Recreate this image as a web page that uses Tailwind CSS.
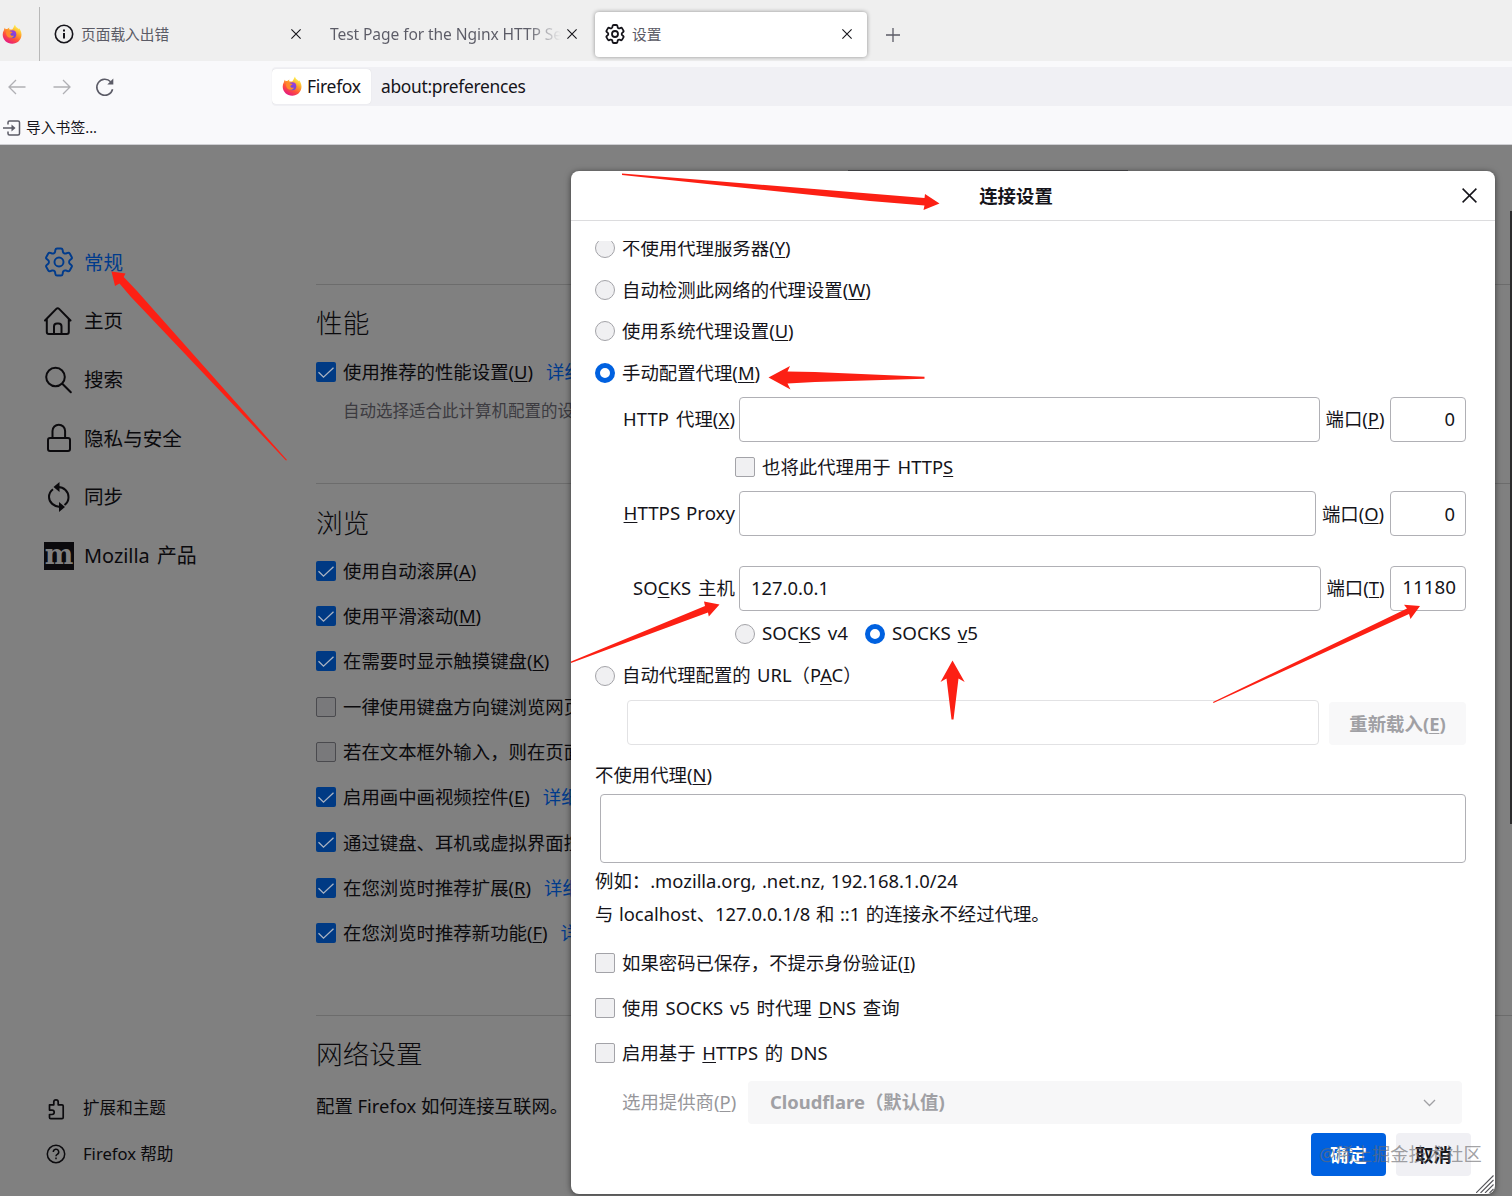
<!DOCTYPE html>
<html lang="zh-CN">
<head>
    <title>设置</title>
    <meta charset="UTF-8">
    <meta name="viewport" content="width=device-width, initial-scale=1.0">
    <script src="https://cdn.jsdelivr.net/npm/@tailwindcss/browser@4"></script>
</head>
<body class="relative w-[1512px] h-[1196px] overflow-hidden bg-[#808080] font-['Noto_Sans','Noto_Sans_CJK_SC',sans-serif] text-[#15141a]">

    <!-- Icons used more than once -->
    <svg class="absolute w-0 h-0">
        <defs>
            <linearGradient id="fx-outer" x1="0.8" y1="0.1" x2="0.3" y2="1">
                <stop offset="0" stop-color="#fff44f"/>
                <stop offset="0.35" stop-color="#ffa22a"/>
                <stop offset="0.65" stop-color="#ff4f3b"/>
                <stop offset="1" stop-color="#e31587"/>
            </linearGradient>
            <linearGradient id="fx-inner" x1="0.7" y1="0" x2="0.3" y2="1">
                <stop offset="0" stop-color="#a43cd8"/>
                <stop offset="1" stop-color="#5a4be0"/>
            </linearGradient>
        </defs>
        <symbol id="firefox" viewBox="0 0 20 20">
            <path fill="url(#fx-outer)" d="M13 .5c.3 1.900 1.500 2.700 2.600 3.600l.8 1.200c.4-.2.5-.7.4-1.200 1.600 1.600 2.700 4 2.700 6.600 0 5-4.200 9-9.300 9S.7 15.700.7 10.700c0-1.800.4-3.300 1.200-4.500.1-1 .4-1.800 1-2.500l.7 1.600c.5-.2 1-.3 1.700-.2.5-.8 1.200-1.400 2.200-1.700-.4.7-.5 1.300-.3 1.900 1 .3 2 .1 3 .3C11.800 4 11.800 2 13 .5z"/>
            <circle cx="10.300" cy="10.300" r="4" fill="url(#fx-inner)"/>
            <path fill="#ff8a2c" d="M4.200 7.200c1.500-.6 3.100-.4 4.300.3 1 .2 1.900.3 1.900.8-.2.800-1.600.9-2.100 1.700.2 1.800 2.200 2.300 3.800 1.400-.8 2.200-3.300 3-5.300 2-2.200-1-3.200-3.600-2.600-6.200z"/>
        </symbol>
        <symbol id="gear" viewBox="2 2 20 20">
            <path fill="none" stroke="currentColor" stroke-linejoin="round" d="M9.594 3.94c.09-.542.56-.94 1.110-.94h2.593c.55 0 1.020.398 1.110.94l.213 1.281c.063.374.313.686.645.87.074.04.147.083.22.127.325.196.72.257 1.075.124l1.217-.456a1.125 1.125 0 0 1 1.370.49l1.296 2.247a1.125 1.125 0 0 1-.26 1.431l-1.003.827c-.293.241-.438.613-.43.992a7.723 7.723 0 0 1 0 .255c-.008.378.137.75.43.991l1.004.827c.424.35.534.955.26 1.430l-1.298 2.247a1.125 1.125 0 0 1-1.369.491l-1.217-.456c-.355-.133-.75-.072-1.076.124a6.470 6.470 0 0 1-.22.128c-.331.183-.581.495-.644.869l-.213 1.281c-.09.543-.56.94-1.110.94h-2.594c-.55 0-1.019-.398-1.110-.94l-.213-1.281c-.062-.374-.312-.686-.644-.87a6.520 6.520 0 0 1-.22-.127c-.325-.196-.72-.257-1.076-.124l-1.217.456a1.125 1.125 0 0 1-1.369-.49l-1.297-2.247a1.125 1.125 0 0 1 .26-1.431l1.004-.827c.292-.24.437-.613.43-.991a6.932 6.932 0 0 1 0-.255c.007-.38-.138-.751-.43-.992l-1.004-.827a1.125 1.125 0 0 1-.26-1.430l1.297-2.247a1.125 1.125 0 0 1 1.370-.491l1.216.456c.356.133.751.072 1.076-.124.072-.044.146-.086.22-.128.332-.183.582-.495.644-.869l.214-1.280Z"/>
            <circle cx="12" cy="12" r="3" fill="none" stroke="currentColor"/>
        </symbol>
        <symbol id="close" viewBox="0 0 10 10">
            <path d="M.4.4l9.200 9.200M9.600.4L.4 9.600" fill="none" stroke="currentColor"/>
        </symbol>
        <symbol id="check" viewBox="0 0 20 20">
            <rect width="20" height="20" rx="2" fill="#003a84"/>
            <path d="M2.500 10.200l5 5L17.500 5.800" fill="none" stroke="#a9b3c2" stroke-width="1.300"/>
        </symbol>
    </svg>

    <!-- Tab bar -->
    <div class="flex items-center h-[61px] bg-[#efefef] text-[#5b5b66]">
        <svg class="w-[20px] h-[20px] ml-[2px] mt-[7px]"><use href="#firefox"/></svg>
        <div class="w-px h-[54px] ml-[17px] mt-[7px] bg-[#b8b8b8]"></div>
        <div class="flex items-center ml-[14px] w-[247px] h-full mt-[7px]">
            <svg class="w-5 h-5 text-[#15141a]" viewBox="0 0 20 20" fill="none" stroke="currentColor" stroke-width="1.600"><circle cx="10" cy="10" r="8.700"/><path d="M10 9v5.500M10 5.600v1.900" stroke-width="2"/></svg>
            <span class="ml-[7px] text-[14.7px]">页面载入出错</span>
            <svg class="w-[10px] h-[10px] ml-auto text-[#15141a] stroke-[1.1]"><use href="#close"/></svg>
        </div>
        <div class="flex items-center ml-[29px] w-[247px] h-full mt-[7px]">
            <span class="w-[231px] pt-[2px] overflow-hidden whitespace-nowrap text-[15.6px] tracking-[-0.1px] bg-linear-to-r from-[#5b5b66] from-85% to-transparent bg-clip-text text-transparent">Test Page for the Nginx HTTP Server</span>
            <svg class="w-[10px] h-[10px] ml-auto text-[#15141a] stroke-[1.1]"><use href="#close"/></svg>
        </div>
        <div class="flex items-center ml-[18px] w-[272px] h-[45px] mt-[7px] rounded bg-white shadow-[0_0_4px_rgba(0,0,0,0.4)] pl-[10px] pr-[15px]">
            <svg class="w-5 h-5 text-[#15141a] stroke-[1.8]"><use href="#gear"/></svg>
            <span class="ml-[7px] text-[14.7px]">设置</span>
            <svg class="w-[10px] h-[10px] ml-auto text-[#15141a] stroke-[1.1]"><use href="#close"/></svg>
        </div>
        <svg class="w-[14px] h-[14px] ml-[19px] mt-[9px]" viewBox="0 0 14 14" stroke="currentColor" stroke-width="1.300"><path d="M7 0v14M0 7h14"/></svg>
    </div>

    <!-- Navigation bar -->
    <div class="flex items-center h-[50px] bg-[#f9f9fb]">
        <svg class="w-[18px] h-[16px] ml-2 mt-px text-[#b0b0b4]" viewBox="0 0 18 16" fill="none" stroke="currentColor" stroke-width="1.300"><path d="M17.500 8H1M8 1L1 8l7 7"/></svg>
        <svg class="w-[18px] h-[16px] ml-[27px] mt-px text-[#b0b0b4]" viewBox="0 0 18 16" fill="none" stroke="currentColor" stroke-width="1.300"><path d="M.5 8H17M10 1l7 7-7 7"/></svg>
        <svg class="w-[20px] h-[20px] ml-[24px] mt-[2px] text-[#5b5b66]" viewBox="0 0 20 20" fill="none" stroke="currentColor" stroke-width="1.600"><path d="M17.600 12.200A8 8 0 1 1 15.600 4.700"/><path d="M18.300 1.500v6h-6z" fill="currentColor" stroke="none"/></svg>
        <div class="flex items-center ml-[157px] flex-1 h-[39px] bg-[#f0f0f4] rounded-l">
            <div class="flex items-center w-[99px] h-[35px] pl-[10px] bg-white rounded shadow-[0_0_1px_rgba(0,0,0,0.15)] whitespace-nowrap">
                <svg class="w-5 h-5"><use href="#firefox"/></svg>
                <span class="ml-[5px] text-[17.500px] tracking-[-0.3px]">Firefox</span>
            </div>
            <span class="ml-[10px] text-[17.400px] tracking-[-0.3px]">about:preferences</span>
        </div>
    </div>

    <!-- Bookmarks bar -->
    <div class="flex items-center h-[34px] bg-[#f9f9fb] border-b border-[#cfcfd3]">
        <svg class="w-[18px] h-[16px] ml-[3px] text-[#5b5b66]" viewBox="0 0 18 16" fill="none" stroke="currentColor" stroke-width="1.500"><path d="M5 4.500V2.500a1.500 1.500 0 0 1 1.500-1.500h8.500a1.500 1.500 0 0 1 1.500 1.500v11a1.500 1.500 0 0 1-1.500 1.500H6.500a1.500 1.500 0 0 1-1.500-1.500v-2M0 8h10"/><path d="M8.500 4.500L12.500 8l-4 3.500z" fill="currentColor" stroke="none"/></svg>
        <span class="ml-[5px] text-[14.800px]">导入书签...</span>
    </div>

    <!-- Preferences page, dimmed -->
    <div class="flex h-[1051px] bg-[#808080] text-[#0b0a0d]">
        <div class="flex flex-col w-[316px] pl-[44px] pt-[88px] text-[19.6px]">
            <div class="flex items-center h-[58.700px] text-[#003b8c]">
                <svg class="w-[30px] h-[30px] stroke-[1.3]"><use href="#gear"/></svg>
                <span class="ml-[10px]">常规</span>
            </div>
            <div class="flex items-center h-[58.700px]">
                <svg class="w-[28px] h-[30px]" viewBox="0 0 28 30" fill="none" stroke="currentColor" stroke-width="2" stroke-linecap="round" stroke-linejoin="round"><path d="M1 14.500L12.300 2.900a2 2 0 0 1 2.800 0L26.500 14.500M2.800 13v13a2 2 0 0 0 2 2h18a2 2 0 0 0 2-2V13M10 28v-7.500a3 3 0 0 1 3-3h1.500a3 3 0 0 1 3 3V28"/></svg>
                <span class="ml-[12px]">主页</span>
            </div>
            <div class="flex items-center h-[58.700px]">
                <svg class="w-[28px] h-[28px]" viewBox="0 0 28 28" fill="none" stroke="currentColor" stroke-width="2" stroke-linecap="round"><circle cx="11.500" cy="11" r="9.300"/><path d="M18.300 17.800l8.500 8.500"/></svg>
                <span class="ml-[12px]">搜索</span>
            </div>
            <div class="flex items-center h-[58.700px]">
                <svg class="w-[28px] h-[30px]" viewBox="0 0 28 30" fill="none" stroke="currentColor" stroke-width="2"><rect x="4" y="15" width="22" height="13" rx="2"/><path d="M8.500 15V8a6.300 6.300 0 0 1 12.600 0v7"/></svg>
                <span class="ml-[12px]">隐私与安全</span>
            </div>
            <div class="flex items-center h-[58.700px]">
                <svg class="w-[28px] h-[30px]" viewBox="0 0 28 30" fill="none" stroke="currentColor" stroke-width="2"><path d="M14 5c6 0 10.500 4.500 10.500 10.200 0 3.500-1.500 6-4 7.800M16 25c-6-.5-11-4.500-11-10 0-3.500 1.500-6 4-7.800"/><path d="M15.500 0v10L9.500 5zM15 20v10l6-5z" fill="currentColor" stroke="none"/></svg>
                <span class="ml-[12px]">同步</span>
            </div>
            <div class="flex items-center h-[58.700px]">
                <div class="flex items-center justify-center w-[30px] h-[28px] bg-[#0b0a0d] text-[#808080] font-['DejaVu_Serif',serif] font-bold text-[27px] leading-[28px] pb-[2px]">m</div>
                <span class="ml-[10px] text-[19.900px] [word-spacing:2px]">Mozilla 产品</span>
            </div>
            <div class="mt-auto mb-[19px] text-[16.600px]">
                <div class="flex items-center h-[45.500px]">
                    <svg class="w-[24px] h-[22px]" viewBox="0 0 24 22" fill="none" stroke="currentColor" stroke-width="1.700" stroke-linejoin="round"><path d="M5.500 8.500V6.800h4.300V4a2.200 2.200 0 0 1 4.400 0v2.800h3.800a1.200 1.200 0 0 1 1.200 1.200v11.500a1.200 1.200 0 0 1-1.200 1.200H6.700a1.200 1.200 0 0 1-1.200-1.200v-3h2.500a2 2 0 0 0 0-4.400H5.500z"/></svg>
                    <span class="ml-[15px]">扩展和主题</span>
                </div>
                <div class="flex items-center h-[45.500px]">
                    <svg class="w-[24px] h-[22px]" viewBox="0 0 24 22" fill="none" stroke="currentColor" stroke-width="1.500"><circle cx="12" cy="11" r="8.700"/><path d="M9.300 9a2.700 2.700 0 1 1 4 2.300c-.9.500-1.300 1-1.300 1.900M12 14.500v1.700"/></svg>
                    <span class="ml-[15px]">Firefox 帮助</span>
                </div>
            </div>
        </div>

        <div class="flex-1 pt-[139px] text-[18.400px] whitespace-nowrap">
            <div class="border-t border-[#6c6c6c]"></div>
            <h2 class="flex items-center h-[77px] text-[26.700px] font-light">性能</h2>
            <div class="flex items-center h-[20px]">
                <svg class="w-5 h-5"><use href="#check"/></svg>
                <span class="ml-[7px]">使用推荐的性能设置(<u class="underline-offset-2">U</u>)</span>
                <a class="ml-[13px] text-[#003b8c]">详细了解</a>
            </div>
            <p class="ml-[27px] mt-[12px] h-[35px] leading-[34px] text-[16.500px] text-[#3c3b40]">自动选择适合此计算机配置的设置。</p>
            <div class="mt-[54px] border-t border-[#6c6c6c]"></div>
            <h2 class="flex items-center h-[64px] pt-[14px] text-[26.700px] font-light">浏览</h2>
            <div class="flex items-center h-[45.300px]">
                <svg class="w-5 h-5"><use href="#check"/></svg>
                <span class="ml-[7px]">使用自动滚屏(<u class="underline-offset-2">A</u>)</span>
            </div>
            <div class="flex items-center h-[45.300px]">
                <svg class="w-5 h-5"><use href="#check"/></svg>
                <span class="ml-[7px]">使用平滑滚动(<u class="underline-offset-2">M</u>)</span>
            </div>
            <div class="flex items-center h-[45.300px]">
                <svg class="w-5 h-5"><use href="#check"/></svg>
                <span class="ml-[7px]">在需要时显示触摸键盘(<u class="underline-offset-2">K</u>)</span>
            </div>
            <div class="flex items-center h-[45.300px]">
                <div class="w-5 h-5 border border-[#4a4a4e] rounded-xs bg-[#79797b]"></div>
                <span class="ml-[7px]">一律使用键盘方向键浏览网页</span>
            </div>
            <div class="flex items-center h-[45.300px]">
                <div class="w-5 h-5 border border-[#4a4a4e] rounded-xs bg-[#79797b]"></div>
                <span class="ml-[7px]">若在文本框外输入，则在页面</span>
            </div>
            <div class="flex items-center h-[45.300px]">
                <svg class="w-5 h-5"><use href="#check"/></svg>
                <span class="ml-[7px]">启用画中画视频控件(<u class="underline-offset-2">E</u>)</span>
                <a class="ml-[13px] text-[#003b8c]">详细了解</a>
            </div>
            <div class="flex items-center h-[45.300px]">
                <svg class="w-5 h-5"><use href="#check"/></svg>
                <span class="ml-[7px]">通过键盘、耳机或虚拟界面控制</span>
            </div>
            <div class="flex items-center h-[45.300px]">
                <svg class="w-5 h-5"><use href="#check"/></svg>
                <span class="ml-[7px]">在您浏览时推荐扩展(<u class="underline-offset-2">R</u>)</span>
                <a class="ml-[13px] text-[#003b8c]">详细了解</a>
            </div>
            <div class="flex items-center h-[45.300px]">
                <svg class="w-5 h-5"><use href="#check"/></svg>
                <span class="ml-[7px]">在您浏览时推荐新功能(<u class="underline-offset-2">F</u>)</span>
                <a class="ml-[13px] text-[#003b8c]">详细了解</a>
            </div>
            <div class="mt-[59px] border-t border-[#6c6c6c]"></div>
            <h2 class="flex items-center h-[77px] text-[26.700px] font-light">网络设置</h2>
            <p class="leading-[26px]">配置 Firefox 如何连接互联网。</p>
        </div>
    </div>

    <!-- Edge of the search box and the scrollbar behind the dialog -->
    <div class="absolute left-[848px] top-[170px] w-[280px] h-px bg-[#4c4c4f]"></div>
    <div class="absolute left-[1510px] top-[211px] w-[2px] h-[613px] bg-[#2c2c2e]"></div>

    <!-- Connection settings dialog -->
    <div class="absolute left-[571px] top-[171px] w-[924px] h-[1023px] flex flex-col rounded-lg bg-white shadow-[0_1px_6px_rgba(0,0,0,0.55)] text-[18.400px] whitespace-nowrap">
        <div class="flex items-center h-[50px] border-b border-[#dcdcde]">
            <span class="flex-1 pl-[15px] text-center font-bold">连接设置</span>
            <svg class="w-[15px] h-[15px] ml-[16px] mr-[18px] stroke-[1]"><use href="#close"/></svg>
        </div>

        <div class="mt-[20px] pl-[24px] pr-[29px] overflow-hidden">
            <div class="-mt-[14px]">
                <label class="flex items-center h-[42px]">
                    <span class="w-5 h-5 rounded-full border border-[#a3a3a8] bg-[#f0f0f2]"></span>
                    <span class="ml-[7px]">不使用代理服务器(<u class="underline-offset-2">Y</u>)</span>
                </label>
                <label class="flex items-center h-[41px]">
                    <span class="w-5 h-5 rounded-full border border-[#a3a3a8] bg-[#f0f0f2]"></span>
                    <span class="ml-[7px]">自动检测此网络的代理设置(<u class="underline-offset-2">W</u>)</span>
                </label>
                <label class="flex items-center h-[42px]">
                    <span class="w-5 h-5 rounded-full border border-[#a3a3a8] bg-[#f0f0f2]"></span>
                    <span class="ml-[7px]">使用系统代理设置(<u class="underline-offset-2">U</u>)</span>
                </label>
                <label class="flex items-center h-[41px]">
                    <span class="w-5 h-5 rounded-full border-[5px] border-[#0061e0] bg-white"></span>
                    <span class="ml-[7px]">手动配置代理(<u class="underline-offset-2">M</u>)</span>
                </label>
            </div>

            <!-- HTTP -->
            <div class="flex items-center mt-[4px] h-[45px]">
                <span class="w-[140px] pb-0.5 text-right tracking-[0.1px] [word-spacing:2px]">HTTP 代理(<u class="underline-offset-2">X</u>)</span>
                <div class="ml-[4px] w-[581px] h-full border border-[#b0b0b5] rounded"></div>
                <span class="flex-1 pb-0.5 text-center">端口(<u class="underline-offset-2">P</u>)</span>
                <div class="flex items-center justify-end w-[76px] h-full pb-0.5 pr-[10px] border border-[#b0b0b5] rounded">0</div>
            </div>
            <label class="flex items-center h-[49px] pl-[140px]">
                <span class="w-5 h-5 rounded-xs border border-[#a3a3a8] bg-[#f0f0f2]"></span>
                <span class="ml-[7px] [word-spacing:2px]">也将此代理用于 HTTP<u class="underline-offset-2">S</u></span>
            </label>
            <!-- HTTPS -->
            <div class="flex items-center h-[45px]">
                <span class="w-[140px] text-right text-[18.700px] [word-spacing:1px]"><u class="underline-offset-2">H</u>TTPS Proxy</span>
                <div class="ml-[4px] w-[577px] h-full border border-[#b0b0b5] rounded"></div>
                <span class="flex-1 text-center">端口(<u class="underline-offset-2">O</u>)</span>
                <div class="flex items-center justify-end w-[76px] h-full pr-[10px] border border-[#b0b0b5] rounded">0</div>
            </div>
            <!-- SOCKS -->
            <div class="flex items-center mt-[30px] h-[45px]">
                <span class="w-[140px] pb-0.5 text-right tracking-[0.1px] [word-spacing:2px]">SO<u class="underline-offset-2">C</u>KS 主机</span>
                <div class="flex items-center ml-[4px] w-[582px] h-full pb-0.5 pl-[11px] border border-[#b0b0b5] rounded">127.0.0.1</div>
                <span class="flex-1 pb-0.5 text-center">端口(<u class="underline-offset-2">T</u>)</span>
                <div class="flex items-center justify-end w-[76px] h-full pb-0.5 pr-[9px] text-[18.800px] border border-[#b0b0b5] rounded">11180</div>
            </div>
            <div class="flex items-center h-[46px] pl-[140px]">
                <span class="w-5 h-5 rounded-full border border-[#a3a3a8] bg-[#f0f0f2]"></span>
                <span class="ml-[7px] w-[103px] pb-0.5 text-[18.800px] [word-spacing:2px]">SOC<u class="underline-offset-2">K</u>S v4</span>
                <span class="w-5 h-5 rounded-full border-[5px] border-[#0061e0] bg-white"></span>
                <span class="ml-[7px] pb-0.5 text-[18.800px] [word-spacing:2px]">SOCKS <u class="underline-offset-2">v</u>5</span>
            </div>

            <!-- PAC -->
            <label class="flex items-center h-[38px]">
                <span class="w-5 h-5 rounded-full border border-[#a3a3a8] bg-[#f0f0f2]"></span>
                <span class="ml-[7px] pb-0.5 [word-spacing:1.5px]">自动代理配置的 URL（P<u class="underline-offset-2">A</u>C）</span>
            </label>
            <div class="flex items-end mt-[5px] h-[45px] pl-[32px]">
                <div class="w-[692px] h-full border border-[#e2e2e4] rounded"></div>
                <div class="flex items-center justify-center ml-auto w-[137px] h-[43px] rounded bg-[#f8f8f9] font-bold text-[#a0a0a4]"><span>重新载入(<u class="underline-offset-2">E</u>)</span></div>
            </div>

            <!-- Exceptions -->
            <div class="flex items-center h-[49px] pt-[10px]"><span>不使用代理(<u class="underline-offset-2">N</u>)</span></div>
            <div class="ml-[5px] h-[69px] border border-[#b0b0b5] rounded"></div>
            <p class="h-[36px] leading-[36px] [word-spacing:1px]">例如：.mozilla.org, .net.nz, 192.168.1.0/24</p>
            <p class="h-[32px] leading-[30px] [word-spacing:0.8px]">与 localhost、127.0.0.1/8 和 ::1 的连接永不经过代理。</p>

            <label class="flex items-center mt-[9px] h-[45px]">
                <span class="w-5 h-5 rounded-xs border border-[#a3a3a8] bg-[#f0f0f2]"></span>
                <span class="ml-[7px]">如果密码已保存，不提示身份验证(<u class="underline-offset-2">I</u>)</span>
            </label>
            <label class="flex items-center h-[45px]">
                <span class="w-5 h-5 rounded-xs border border-[#a3a3a8] bg-[#f0f0f2]"></span>
                <span class="ml-[7px] [word-spacing:2px]">使用 SOCKS v5 时代理 <u class="underline-offset-2">D</u>NS 查询</span>
            </label>
            <label class="flex items-center h-[45px]">
                <span class="w-5 h-5 rounded-xs border border-[#a3a3a8] bg-[#f0f0f2]"></span>
                <span class="ml-[7px] [word-spacing:2px]">启用基于 <u class="underline-offset-2">H</u>TTPS 的 DNS</span>
            </label>
            <div class="flex items-center mt-[6px] h-[43px] pl-[27px] text-[#97979b]">
                <span class="w-[126px] pb-0.5">选用提供商(<u class="underline-offset-2">P</u>)</span>
                <div class="flex items-center w-[714px] h-full pl-[22px] pr-[26px] rounded bg-[#f7f7f8] font-bold text-[#a0a0a4]">
                    <span class="pb-0.5">Cloudflare（默认值)</span>
                    <svg class="ml-auto w-[13px] h-[8px]" viewBox="0 0 13 8" fill="none" stroke="currentColor" stroke-width="1.300"><path d="M1 1l5.500 5.500L12 1"/></svg>
                </div>
            </div>
        </div>

        <div class="flex justify-end gap-[10px] mt-[9px] pr-[24px] font-bold">
            <div class="flex items-center justify-center w-[75px] h-[43px] rounded bg-[#0061e0] text-white">确定</div>
            <div class="flex items-center justify-center w-[75px] h-[43px] rounded bg-[#f0f0f4]">取消</div>
        </div>

        <!-- Watermark and resize grip -->
        <div class="absolute left-[748px] top-[970px] text-[18.300px] leading-[26px] text-[#6c6c70]/65">@稀土掘金技术社区</div>
        <svg class="absolute right-[1px] bottom-[1px] w-[18px] h-[18px]" viewBox="0 0 18 18" fill="none" stroke="#55555a" stroke-width="1.100"><path d="M0 18L17.500.5M4.500 18L17.500 5M9 18l8.500-8.500M13.500 18l4-4"/></svg>
    </div>

    <!-- Red arrows -->
    <svg class="absolute left-0 top-0 w-[1512px] h-[1196px]" viewBox="0 0 1512 1196" fill="#fc2014">
        <path d="M622 173.500L924.500 198l.5-4 14.500 9.500L923.500 210l1-4.500L870 201L622 175Z"/>
        <path d="M111.500 271.500L125.500 273.500l-1.800 3.500L137 291l150 169-1 .5L131 297l-11.500-13.500-4.500 2.500Z"/>
        <path d="M768.500 377.500L790 366l-2.500 5.500L815 372l109.500 4.800v2L815 382l-27.500 1.500L790.500 389.500Z"/>
        <path d="M719.500 604.500L704 601.500l1 4.500L571 661.500v1.500L708 612.500l.8 4Z"/>
        <path d="M1420 606L1404 604.700l3 3.800L1213 702l.5 1L1409 614l1.500 5Z"/>
        <path d="M952.500 660.500L940.500 682l6-3.500L951.500 719.500h2l5-41 6.200 3.500Z"/>
    </svg>
</body>
</html>
